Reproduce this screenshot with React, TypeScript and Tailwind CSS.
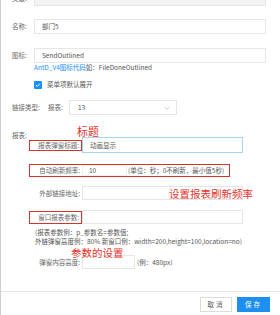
const red = 'border border-[#d8322e]'

const Field = ({ value, className = '' }: { value?: string; className?: string }) => (
  <div className={`flex items-center border border-[#e6e6e6] bg-white pl-[7px] text-[#555] ${className}`}>{value}</div>
)

const App = () => {
  return (
    <div className="relative flex h-[315px] w-[280px] flex-col overflow-hidden border-l border-[#cfcfcf] bg-white font-['Noto_Sans_CJK_SC','Noto_Sans',sans-serif] text-[6.5px] leading-[9px] text-[#666]">
      <div className="flex flex-col pl-[11px]">
        {/* 父级 */}
        <div className="-mt-[9px] flex h-[15px] items-center">
          <span className="w-[22px]">父级:</span>
          <div className="h-[15px] w-[232px] border border-[#e6e6e6] bg-[#f3f3f3]" />
        </div>

        <div className="mt-[13px] flex h-[15px] items-center">
          <span className="w-[22px]">名称:</span>
          <Field value="部门5" className="h-[15px] w-[232px]" />
        </div>

        <div className="mt-[14px] flex h-[15px] items-center">
          <span className="w-[22px]">图标:</span>
          <Field value="SendOutlined" className="h-[15px] w-[232px]" />
        </div>
        <div className="h-[9px] whitespace-nowrap pl-[22px]">
          <span className="text-[#1890ff]">AntD_V4图标代码</span>
          <span className="text-[#555]">如：FileDoneOutlined</span>
        </div>

        <div className="mt-[8px] flex h-[9px] items-center pl-[22px]">
          <span className="flex h-[8px] w-[8px] items-center justify-center rounded-[1px] bg-[#1890ff]">
            <svg width="6" height="6" viewBox="0 0 6 6">
              <path d="M1 3.1 L2.4 4.4 L5 1.6" fill="none" stroke="white" strokeWidth="1" />
            </svg>
          </span>
          <span className="ml-[5px] text-[#555]">菜单项默认展开</span>
        </div>

        <div className="mt-[11px] flex h-[15px] items-center">
          <span className="w-[36px]">链接类型:</span>
          <span className="w-[21px]">报表:</span>
          <div className="flex h-[15px] w-[108px] items-center justify-between border border-[#e6e6e6] pl-[8px] pr-[6px] text-[#555]">
            <span>13</span>
            <svg width="6" height="4" viewBox="0 0 6 4">
              <path d="M0.5 0.8 L3 3.2 L5.5 0.8" fill="none" stroke="#bbb" strokeWidth="0.8" />
            </svg>
          </div>
        </div>

        <div className="mt-[16px] h-[9px]">报表:</div>

        {/* 报表子表单 */}
        <div className="-mt-[3px] flex flex-col pl-[17px]">
          <div className="flex h-[16px] items-center">
            <span className={`h-[11px] w-[53px] whitespace-nowrap pr-[2px] text-right leading-[9px] ${red}`}>报表弹窗标题:</span>
            <div className="flex h-[16px] w-[161px] items-center border border-[#a9d6ef] pl-[7px] text-[#555]">动画显示</div>
          </div>

          <div className={`mt-[11px] flex h-[13px] w-[201px] items-center whitespace-nowrap ${red}`}>
            <span className="w-[52px] pr-[2px] text-right">自动刷新频率:</span>
            <div className="flex h-[11px] w-[45px] items-center border border-[#f0f0f0] pl-[6px] text-[#555]">10</div>
            <span className="ml-[1px] text-[#555]">(单位：秒；0不刷新，最小值5秒)</span>
          </div>

          <div className="mt-[9px] flex h-[14px] items-center">
            <span className="w-[53px] whitespace-nowrap pr-[2px] text-right">外部链接地址:</span>
            <Field className="h-[14px] w-[161px]" />
          </div>

          <div className="mt-[10px] flex h-[14px] items-center">
            <span className={`h-[13px] w-[53px] whitespace-nowrap pr-[2px] text-right leading-[11px] ${red}`}>窗口报表参数:</span>
            <Field className="h-[14px] w-[161px]" />
          </div>

          <div className="mt-[4px] flex flex-col pl-[6px] text-[#555]">
            <span className="h-[9px]">(报表参数例：p_参数名=参数值;</span>
            <span className="h-[9px] whitespace-nowrap">外链弹窗高度例：80% 新窗口例：width=200,height=100,location=no)</span>
          </div>

          <div className="mt-[9px] flex h-[14px] items-center">
            <span className="w-[53px] whitespace-nowrap pr-[2px] text-right">弹窗内容高度:</span>
            <Field className="h-[14px] w-[53px]" />
            <span className="ml-[2px] text-[#555]">(例：480px)</span>
          </div>
        </div>
      </div>

      <div className="mt-auto flex h-[24px] justify-end gap-[5px] border-t border-[#e8e8e8] pr-[10px] pt-[5px]">
        <button className="h-[15px] w-[32px] border border-[#dcdcdc] bg-white tracking-[2px] text-[#555]">取消</button>
        <button className="h-[15px] w-[33px] bg-[#1d8ff0] tracking-[2px] text-white">保存</button>
      </div>

      {/* 红色标注 */}
      <span className="absolute left-[76px] top-[125px] text-[11px] leading-[12px] text-[#e8322c]">标题</span>
      <span className="absolute left-[168px] top-[188px] text-[10.5px] leading-[12px] text-[#e8322c]">设置报表刷新频率</span>
      <span className="absolute left-[70px] top-[247px] text-[10.5px] leading-[12px] text-[#e8322c]">参数的设置</span>
    </div>
  )
}

export default App
